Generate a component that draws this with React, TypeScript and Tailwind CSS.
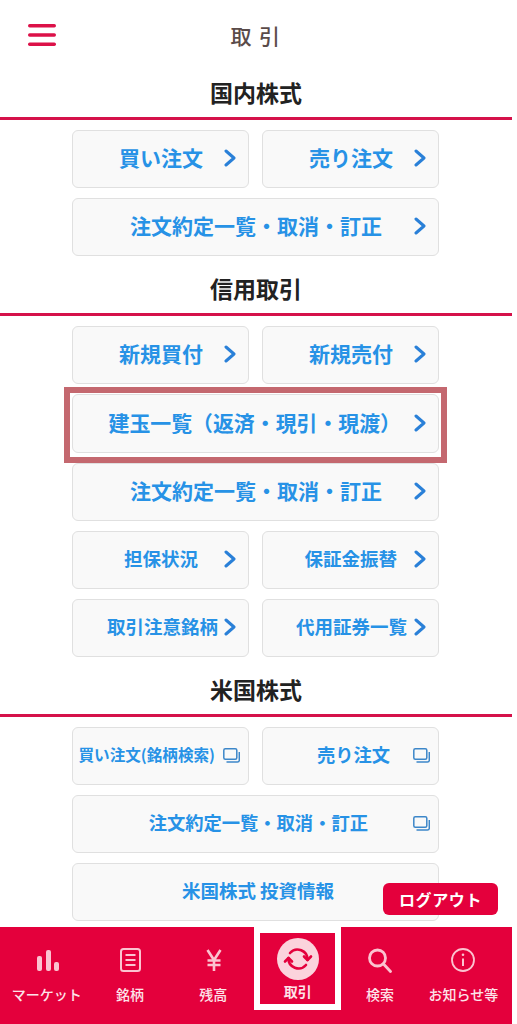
import type { ReactNode } from "react";

const FONT = "[font-family:'Noto_Sans_CJK_JP','Noto_Sans',sans-serif]";

function CopyIcon() {
  return (
    <svg width="17" height="15" viewBox="0 0 17 15" fill="none" stroke="#3d87c9" strokeWidth="1.5" className="-mr-[4px] shrink-0">
      <rect x="0.800" y="0.800" width="13" height="10.500" rx="1.500" />
      <path d="M3.500 14h11a1.800 1.800 0 0 0 1.800-1.800V4" />
    </svg>
  );
}

function Arrow() {
  return (
    <svg width="12" height="18" viewBox="0 0 12 18" fill="none" stroke="#2a80d8" strokeWidth="3" strokeLinecap="round" strokeLinejoin="round" className="shrink-0">
      <path d="M2 2l8 7-8 7" />
    </svg>
  );
}

function Btn({ label, gap, size, icon, height = "h-[58px]" }: { label: string; gap: string; size: string; icon?: ReactNode; height?: string }) {
  return (
    <div className={`flex min-w-0 items-center justify-end rounded-md border-[1.5px] border-[#e0e0e0] bg-[#f9f9f9] pr-[12px] pb-[2px] font-bold text-[#2792e6] ${height} ${gap} ${size}`}>
      <span className="whitespace-nowrap">{label}</span>
      {icon}
    </div>
  );
}

function Heading({ title, height }: { title: string; height: string }) {
  return (
    <div className={`flex items-end justify-center border-b-[3px] border-[#d5114a] pb-[9px] ${height}`}>
      <h2 className="text-[23px] leading-[32px] font-bold text-[#222]">{title}</h2>
    </div>
  );
}

function Row({ children }: { children: ReactNode }) {
  return <div className="grid grid-cols-[177px_177px] gap-x-[13px]">{children}</div>;
}

function NavItem({ label, icon }: { label: string; icon: ReactNode }) {
  return (
    <div className="flex flex-col items-center pt-[17px]">
      <div className="flex h-[32px] items-center justify-center">{icon}</div>
      <span className="mt-[8px] whitespace-nowrap text-[14px] leading-[20px] font-medium text-[#fde3e9]">{label}</span>
    </div>
  );
}

const PINK = "#fbc3d0";

export default function App() {
  return (
    <div className={`relative flex h-[1024px] w-[512px] flex-col overflow-hidden bg-white ${FONT}`}>
      <header className="grid h-[70px] grid-cols-[1fr_auto_1fr] items-center px-[28px]">
        <svg width="28" height="22" viewBox="0 0 28 22" className="-mt-[1px]">
          <rect y="0" width="28" height="3.400" rx="1.700" fill="#dc1148" />
          <rect y="9.300" width="28" height="3.400" rx="1.700" fill="#dc1148" />
          <rect y="18.600" width="28" height="3.400" rx="1.700" fill="#dc1148" />
        </svg>
        <h1 className="text-[21px] leading-[28px] font-medium tracking-[1.5px] text-[#5a4b49]">取 引</h1>
        <div />
      </header>

      <Heading title="国内株式" height="h-[50px]" />
      <div className="ml-[72px] mt-[10px] flex w-[367px] flex-col gap-[10px]">
        <Row>
          <Btn label="買い注文" gap="gap-[21px]" size="text-[21px]" icon={<Arrow />} />
          <Btn label="売り注文" gap="gap-[21px]" size="text-[21px]" icon={<Arrow />} />
        </Row>
        <Btn label="注文約定一覧・取消・訂正" gap="gap-[32px]" size="text-[21px]" icon={<Arrow />} />
      </div>

      <Heading title="信用取引" height="h-[60px]" />
      <div className="ml-[72px] mt-[10px] flex w-[367px] flex-col gap-[10px]">
        <Row>
          <Btn label="新規買付" gap="gap-[21px]" size="text-[21px]" icon={<Arrow />} />
          <Btn label="新規売付" gap="gap-[21px]" size="text-[21px]" icon={<Arrow />} />
        </Row>
        <div className="relative">
          <Btn label="建玉一覧（返済・現引・現渡）" gap="gap-[13px]" size="text-[20.900px]" height="h-[59px]" icon={<Arrow />} />
          <div className="absolute -top-[7px] -right-[8px] -bottom-[10px] -left-[8px] border-[6px] border-[#c4686f]" />
        </div>
        <Btn label="注文約定一覧・取消・訂正" gap="gap-[32px]" size="text-[21px]" icon={<Arrow />} />
        <Row>
          <Btn label="担保状況" gap="gap-[26px]" size="text-[18.500px]" icon={<Arrow />} />
          <Btn label="保証金振替" gap="gap-[17px]" size="text-[18.500px]" icon={<Arrow />} />
        </Row>
        <Row>
          <Btn label="取引注意銘柄" gap="gap-[6px]" size="text-[18.500px]" icon={<Arrow />} />
          <Btn label="代用証券一覧" gap="gap-[7px]" size="text-[18.500px]" icon={<Arrow />} />
        </Row>
      </div>

      <Heading title="米国株式" height="h-[60px]" />
      <div className="ml-[72px] mt-[10px] flex w-[367px] flex-col gap-[10px]">
        <Row>
          <Btn label="買い注文(銘柄検索)" gap="gap-[8px]" size="text-[15.600px]" icon={<CopyIcon />} />
          <Btn label="売り注文" gap="gap-[23px]" size="text-[18.300px]" icon={<CopyIcon />} />
        </Row>
        <Btn label="注文約定一覧・取消・訂正" gap="gap-[45px]" size="text-[18.300px]" icon={<CopyIcon />} />
        <div className="flex h-[58px] items-center justify-center rounded-md border-[1.5px] border-[#e0e0e0] bg-[#f9f9f9] pb-[2px] pl-[5px] text-[18.500px] font-bold text-[#2792e6]">
          米国株式 投資情報
        </div>
      </div>

      <div className="absolute top-[883px] left-[383px] flex h-[32px] w-[115px] items-center justify-center rounded-md bg-[#e4003c] text-[16px] font-bold tracking-[0.6px] text-white">
        ログアウト
      </div>

      <nav className="mt-auto grid h-[97px] shrink-0 grid-cols-6 bg-[#e4003c] pr-[7px] pl-[5px]">
        <NavItem
          label="マーケット"
          icon={
            <svg width="22" height="22" viewBox="0 0 22 22" fill={PINK} className="ml-[2px]">
              <rect x="0" y="7" width="5" height="15" rx="2" />
              <rect x="9" y="1" width="5" height="21" rx="2" />
              <rect x="17" y="13" width="5" height="9" rx="2" />
            </svg>
          }
        />
        <NavItem
          label="銘柄"
          icon={
            <svg width="21" height="24" viewBox="0 0 21 24" fill="none" stroke={PINK} strokeWidth="2" className="ml-[1px]">
              <rect x="1" y="1" width="19" height="22" rx="2.500" />
              <path d="M5.500 7h10M5.500 12h10M5.500 17h10" strokeWidth="2.200" />
            </svg>
          }
        />
        <NavItem
          label="残高"
          icon={
            <svg width="16" height="22" viewBox="0 0 16 22" fill="none" stroke={PINK} strokeWidth="2.600" className="ml-[2px]">
              <path d="M1.500 1l6.500 10 6.500-10M8 11V22M1.500 11.500h13M1.500 16h13" />
            </svg>
          }
        />
        <div className="-mr-[3px] -ml-[1px] mb-[14px] flex flex-col items-center border-[6px] border-white pt-[5px]">
          <div className="flex h-[42px] w-[42px] items-center justify-center rounded-full bg-[#fbd3dc]">
            <svg width="30" height="30" viewBox="0 0 30 30" fill="none" stroke="#e4003c" strokeWidth="2.600" strokeLinecap="round" strokeLinejoin="round">
              <path d="M7 9A10 10 0 0 1 24.500 16" />
              <path d="M21 12.500L24.500 16L28 12.500" />
              <path d="M23 21A10 10 0 0 1 5.500 14" />
              <path d="M9 17.500L5.500 14L2 17.500" />
            </svg>
          </div>
          <span className="mt-[1px] text-[14px] leading-[20px] font-bold text-[#fde3e9]">取引</span>
        </div>
        <NavItem
          label="検索"
          icon={
            <svg width="24" height="25" viewBox="0 0 24 25" fill="none" stroke={PINK} strokeWidth="2.800" strokeLinecap="round">
              <circle cx="9.500" cy="10" r="8" />
              <path d="M15.500 16l7 7.500" />
            </svg>
          }
        />
        <NavItem
          label="お知らせ等"
          icon={
            <svg width="24" height="24" viewBox="0 0 24 24" fill="none" stroke={PINK} strokeWidth="1.800">
              <circle cx="12" cy="12" r="11" />
              <path d="M12 10.500v7.500" strokeWidth="2" />
              <circle cx="12" cy="6.800" r="1.300" fill={PINK} stroke="none" />
            </svg>
          }
        />
      </nav>
    </div>
  );
}
